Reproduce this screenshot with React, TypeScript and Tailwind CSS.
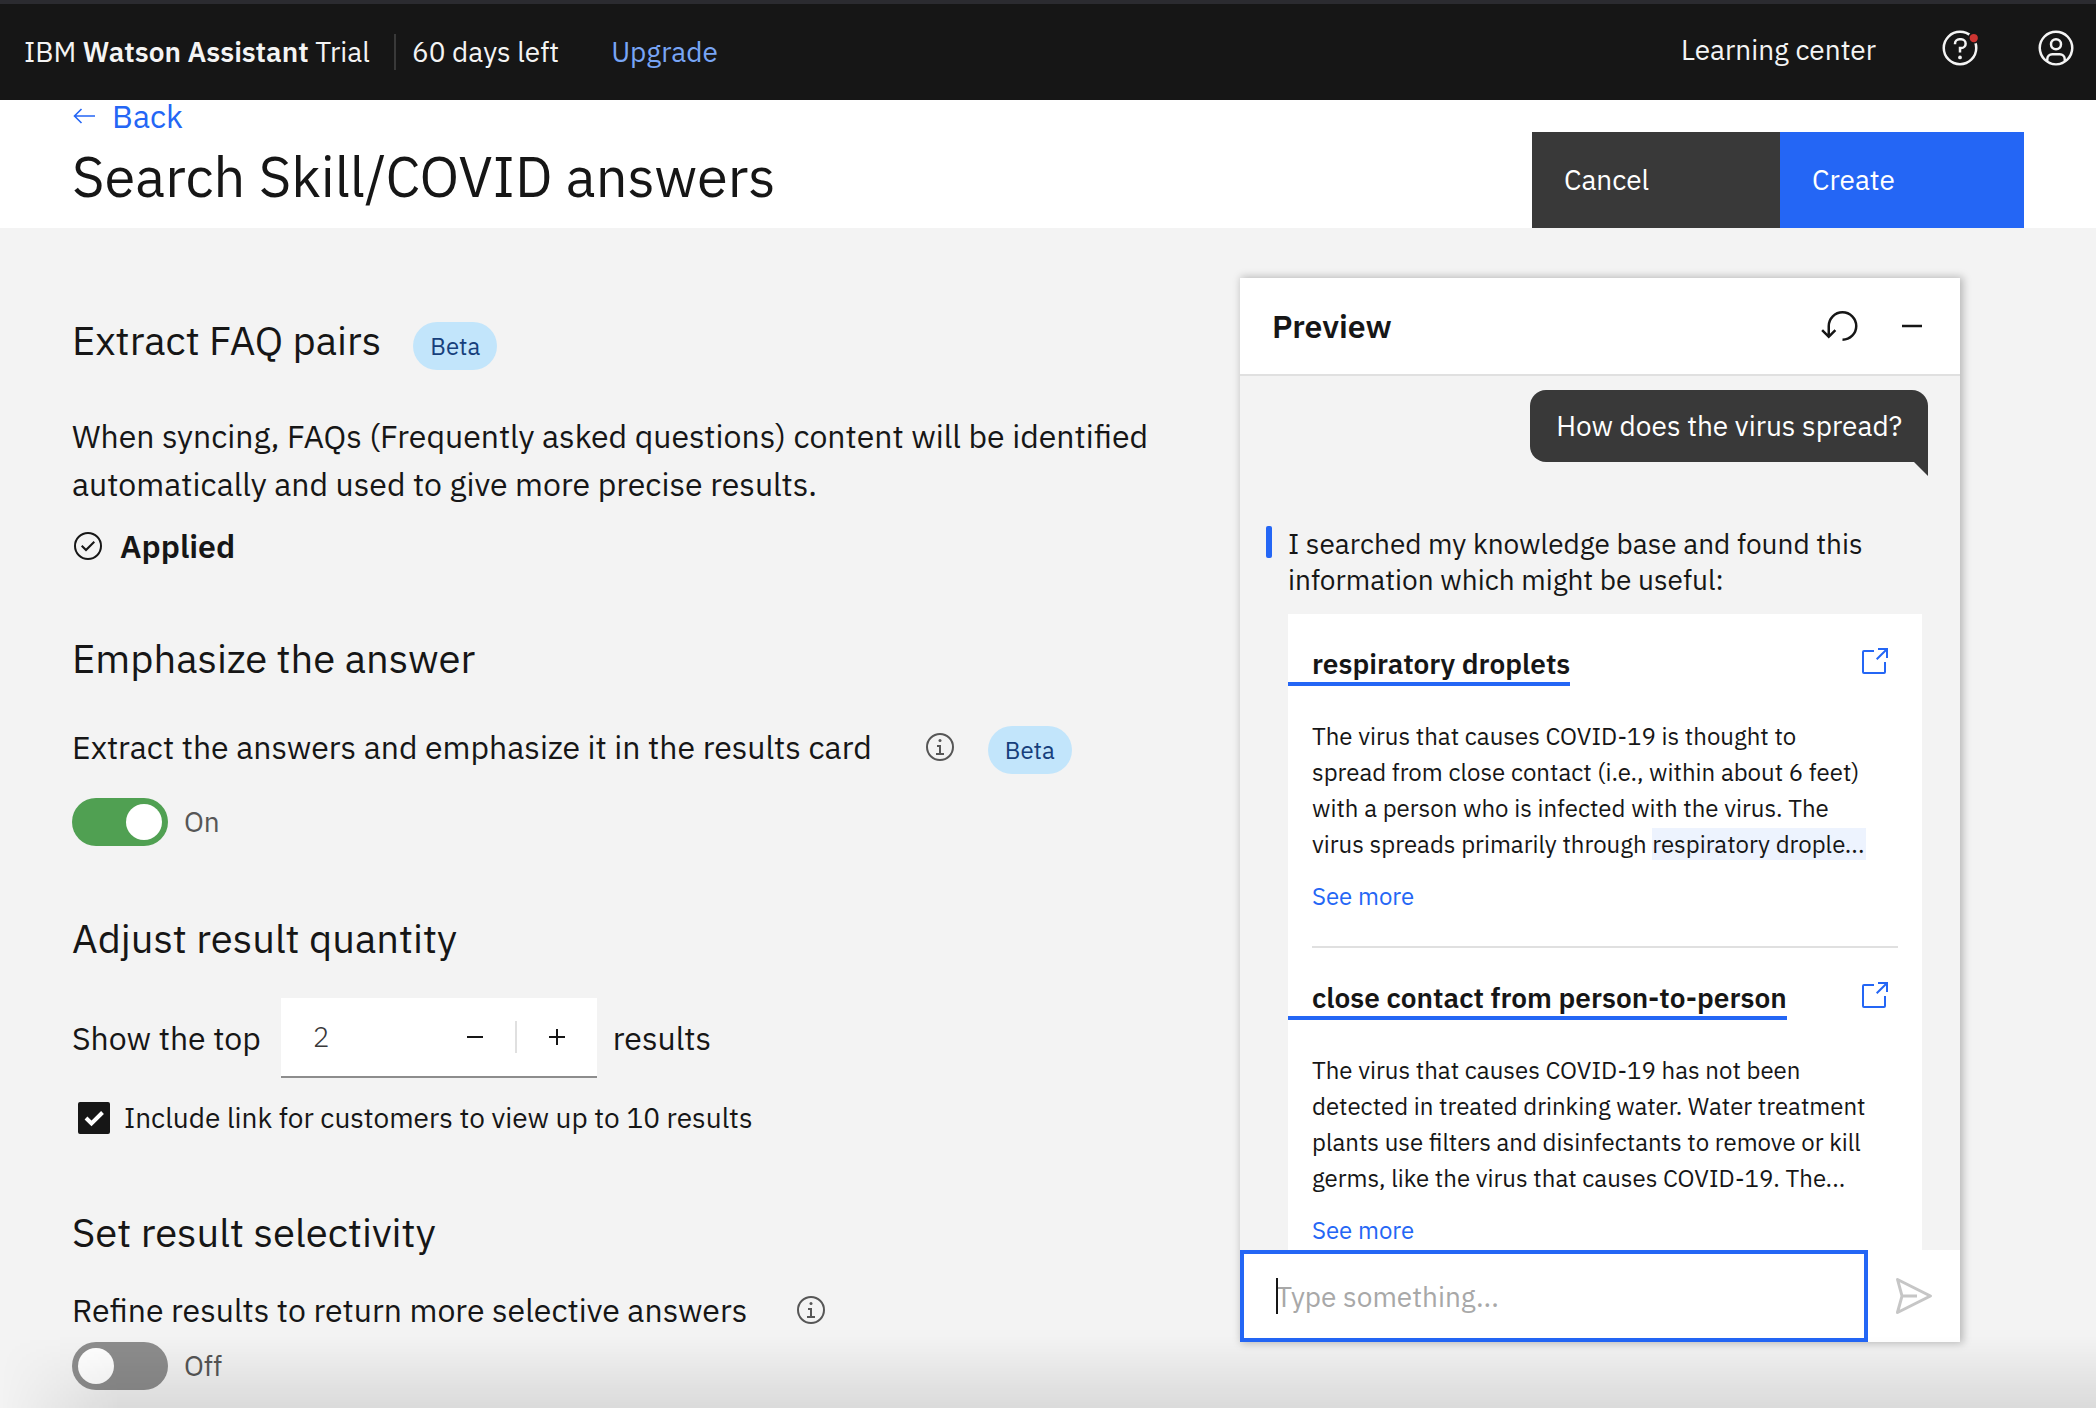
import React, { useState } from "react";

type IconProps = { className?: string; children?: React.ReactNode };

function Icon({ className, children }: IconProps) {
  return (
    <svg viewBox="0 0 32 32" fill="currentColor" aria-hidden="true" className={className}>
      {children}
    </svg>
  );
}

const ring = "M16 2A14 14 0 1 0 30 16 14 14 0 0 0 16 2zm0 26A12 12 0 1 1 28 16 12 12 0 0 1 16 28z";

function HelpIcon() {
  return (
    <Icon className="size-10">
      <path d={ring} />
      <circle cx="16" cy="23.5" r="1.5" />
      <path d="M17 8h-1.5A4.49 4.49 0 0 0 11 12.5v.5h2v-.5A2.5 2.5 0 0 1 15.5 10H17a2.5 2.5 0 0 1 0 5h-2v4.5h2V17a4.5 4.5 0 0 0 0-9z" />
      <circle cx="27" cy="8" r="4.6" fill="#161616" />
      <circle cx="27" cy="8" r="3.3" fill="#cd3532" />
    </Icon>
  );
}

function UserIcon() {
  return (
    <Icon className="size-10">
      <path d="M16 8a5 5 0 1 0 5 5 5 5 0 0 0-5-5zm0 8a3 3 0 1 1 3-3 3 3 0 0 1-3 3z" />
      <path d="M16 2a14 14 0 1 0 14 14A14.016 14.016 0 0 0 16 2zm-6 24.377V25a3.003 3.003 0 0 1 3-3h6a3.003 3.003 0 0 1 3 3v1.377a11.9 11.9 0 0 1-12 0zm13.993-1.451A5.002 5.002 0 0 0 19 20h-6a5.002 5.002 0 0 0-4.993 4.926 12 12 0 1 1 15.986 0z" />
    </Icon>
  );
}

function InfoIcon() {
  return (
    <Icon className="size-8">
      <path d="M17 22v-8h-4v2h2v6h-3v2h8v-2z" />
      <path d="M16 8a1.5 1.5 0 1 0 1.5 1.5A1.5 1.5 0 0 0 16 8z" />
      <path d={ring} />
    </Icon>
  );
}

function LaunchIcon() {
  return (
    <Icon className="size-8">
      <path d="M26 28H6a2.003 2.003 0 0 1-2-2V6a2.003 2.003 0 0 1 2-2h10v2H6v20h20V16h2v10a2.003 2.003 0 0 1-2 2z" />
      <path d="M20 2v2h6.586L18 12.586 19.414 14 28 5.414V12h2V2z" />
    </Icon>
  );
}

function Beta() {
  return (
    <span className="mt-1.5 flex h-12 w-21 items-center justify-center rounded-full bg-[#c2e5fb] text-2xl text-[#163f7c]">
      Beta
    </span>
  );
}

function Heading({ children }: { children: React.ReactNode }) {
  return <h2 className="text-[40px] leading-12">{children}</h2>;
}

function Toggle({ label, initial }: { label: string; initial: boolean }) {
  const [on, setOn] = useState(initial);
  return (
    <label className="flex w-fit items-center gap-4 text-[28px] leading-12 text-[#565656]">
      <input
        type="checkbox"
        role="switch"
        aria-label={label}
        checked={on}
        onChange={() => setOn(!on)}
        className="h-12 w-24 appearance-none rounded-full bg-[#8d8d8d] p-1.5 before:block before:size-9 before:rounded-full before:bg-white checked:bg-[#50a052] checked:before:ml-12"
      />
      {on ? "On" : "Off"}
    </label>
  );
}

function Result({ title, children }: { title: string; children: React.ReactNode }) {
  return (
    <article className="pt-8">
      <div className="flex items-start justify-between pr-6">
        <h3 className="border-b-4 border-[#2466f5] pl-6 text-[28px] leading-9 font-semibold">{title}</h3>
        <a href="#source" aria-label={"Open " + title} className="mr-2 text-[#2466f5]">
          <LaunchIcon />
        </a>
      </div>
      <p className="mt-8 pr-10 pl-6 text-2xl leading-9">{children}</p>
      <a href="#more" className="mt-4 ml-6 block w-fit text-2xl leading-9 text-[#2466f5]">
        See more
      </a>
    </article>
  );
}

export default function App() {
  const [count, setCount] = useState(2);
  const [include, setInclude] = useState(true);

  return (
    <div className="relative flex min-h-screen flex-col overflow-hidden bg-[#f3f3f3] font-['IBM_Plex_Sans',Roboto,sans-serif] text-[#161616]">
      <header className="flex h-25 items-center justify-between border-t-4 border-[#2b2b30] bg-[#161616] pr-5 pl-6 text-[28px] leading-9 text-[#f4f4f4]">
        <div className="flex items-center">
          <span>
            IBM <b className="font-semibold">Watson Assistant</b> Trial
          </span>
          <span className="mr-4 ml-6 h-9 w-0.5 bg-[#393939]" />
          <span>60 days left</span>
          <a href="#upgrade" className="ml-13 text-[#78a5f5]">
            Upgrade
          </a>
        </div>
        <nav className="flex items-center pb-2">
          <a href="#learning" className="pt-1">
            Learning center
          </a>
          <button aria-label="Help" className="ml-16">
            <HelpIcon />
          </button>
          <button aria-label="Account" className="ml-14">
            <UserIcon />
          </button>
        </nav>
      </header>

      <div className="flex items-end justify-between bg-white px-18">
        <div>
          <a href="#back" className="flex items-center gap-4 text-[32px] leading-8 text-[#2466f5]">
            <svg viewBox="0 0 24 24" fill="none" stroke="currentColor" strokeWidth="1.6" aria-hidden="true" className="size-6">
              <path d="M23 12H2.500M9.500 5l-7 7 7 7" />
            </svg>
            Back
          </a>
          <h1 className="pt-1 pb-3 text-[56px] leading-20">Search Skill/COVID answers</h1>
        </div>
        <div className="flex text-[28px] text-white">
          <button className="h-24 w-62 bg-[#393939] px-8 text-left">Cancel</button>
          <button className="h-24 w-61 bg-[#2466f5] px-8 text-left">Create</button>
        </div>
      </div>

      <main className="flex items-start justify-between pr-34 pl-18">
        <div className="max-w-[1130px] pt-22 text-[32px] leading-12">
          <section>
            <div className="flex items-start gap-8">
              <Heading>Extract FAQ pairs</Heading>
              <Beta />
            </div>
            <p className="mt-10.5">
              When syncing, FAQs (Frequently asked questions) content will be identified
              <br />
              automatically and used to give more precise results.
            </p>
            <p className="mt-3.5 flex items-center gap-4 font-semibold">
              <Icon className="size-8">
                <path d="M14 21.414l-5-5.001L10.413 15 14 18.586 21.585 11 23 12.415z" />
                <path d={ring} />
              </Icon>
              Applied
            </p>
          </section>

          <section className="mt-16">
            <Heading>Emphasize the answer</Heading>
            <div className="mt-9.5 flex items-center">
              <p>Extract the answers and emphasize it in the results card</p>
              <button aria-label="About emphasized answers" className="mr-8 ml-13 text-[#565656]">
                <InfoIcon />
              </button>
              <Beta />
            </div>
            <div className="mt-6">
              <Toggle label="Emphasize the answer" initial={true} />
            </div>
          </section>

          <section className="mt-17">
            <Heading>Adjust result quantity</Heading>
            <div className="mt-9 flex items-center gap-4">
              <label htmlFor="count" className="mr-1">
                Show the top
              </label>
              <div className="flex h-20 w-79 items-center border-b-2 border-[#8d8d8d] bg-white pl-8">
                <input
                  id="count"
                  inputMode="numeric"
                  value={count}
                  onChange={(e) => setCount(Number(e.target.value) || 0)}
                  className="min-w-0 flex-1 text-[28px] font-light text-[#393939] outline-none"
                />
                <button aria-label="Fewer results" onClick={() => setCount(count - 1)} className="px-6">
                  <Icon className="size-8">
                    <path d="M8 15h16v2H8z" />
                  </Icon>
                </button>
                <span className="h-8 w-0.5 bg-[#e0e0e0]" />
                <button aria-label="More results" onClick={() => setCount(count + 1)} className="px-6">
                  <Icon className="size-8">
                    <path d="M17 15V8h-2v7H8v2h7v7h2v-7h7v-2z" />
                  </Icon>
                </button>
              </div>
              <span>results</span>
            </div>
            <label className="mt-5.5 ml-1.5 flex w-fit items-center gap-3.5 text-[28px] leading-9">
              <span className="relative size-8">
                <input
                  type="checkbox"
                  checked={include}
                  onChange={() => setInclude(!include)}
                  className="block size-8 appearance-none rounded-xs border-2 border-[#161616] checked:bg-[#161616]"
                />
                <svg
                  viewBox="0 0 32 32"
                  fill="none"
                  stroke="white"
                  strokeWidth="4"
                  aria-hidden="true"
                  className="pointer-events-none absolute inset-0 size-8"
                >
                  <path d="M8 16l5.500 5.500L24.500 10.500" />
                </svg>
              </span>
              Include link for customers to view up to 10 results
            </label>
          </section>

          <section className="mt-18">
            <Heading>Set result selectivity</Heading>
            <div className="mt-7.5 flex items-center">
              <p>Refine results to return more selective answers</p>
              <button aria-label="About selectivity" className="ml-12 text-[#565656]">
                <InfoIcon />
              </button>
            </div>
            <div className="mt-2">
              <Toggle label="Refine results" initial={false} />
            </div>
          </section>
        </div>

        <aside className="mt-12.5 w-180 shrink-0 bg-[#f3f3f3] shadow-[2px_0_8px_1px_rgba(0,0,0,0.25)]">
          <div className="flex h-24.5 items-center border-b-2 border-[#e0e0e0] bg-white pr-7 pl-8">
            <h2 className="flex-1 text-[32px] leading-12 font-semibold">Preview</h2>
            <button aria-label="Restart conversation" className="mr-8">
              <Icon className="size-10">
                <path d="M18 28A12 12 0 1 0 6 16v6.200l-3.600-3.600L1 20l6 6 6-6-1.400-1.400L8 22.200V16a10 10 0 1 1 10 10z" />
              </Icon>
            </button>
            <button aria-label="Minimize">
              <Icon className="size-10">
                <path d="M8 15h16v2H8z" />
              </Icon>
            </button>
          </div>

          <div className="pt-3.5 text-[28px] leading-9">
            <div className="relative mr-8 ml-auto flex h-18 w-fit items-center rounded-2xl rounded-br-none bg-[#393939] px-6.5 text-white">
              How does the virus spread?
              <svg viewBox="0 0 14 14" aria-hidden="true" className="absolute top-full right-0 size-3.5">
                <path d="M0 0h14v14z" fill="#393939" />
              </svg>
            </div>
            <div className="mt-16 mr-9.5 ml-6.5 flex items-start gap-4">
              <span className="h-8 w-1.5 shrink-0 rounded-xs bg-[#2466f5]" />
              <p>
                I searched my knowledge base and found this
                <br />
                information which might be useful:
              </p>
            </div>
            <div className="mt-4 mr-9.5 ml-12 bg-white pb-0.5">
              <Result title="respiratory droplets">
                The virus that causes COVID-19 is thought to
                <br />
                spread from close contact (i.e., within about 6 feet)
                <br />
                with a person who is infected with the virus. The
                <br />
                virus spreads primarily through{" "}
                <mark className="bg-[#edf3fe] pr-0.5 text-inherit">respiratory drople...</mark>
              </Result>
              <hr className="mx-6 mt-8 border-t-2 border-[#e0e0e0]" />
              <Result title="close contact from person-to-person">
                The virus that causes COVID-19 has not been
                <br />
                detected in treated drinking water. Water treatment
                <br />
                plants use filters and disinfectants to remove or kill
                <br />
                germs, like the virus that causes COVID-19. The...
              </Result>
            </div>
          </div>

          <form className="flex h-23 bg-white" onSubmit={(e) => e.preventDefault()}>
            <div className="relative flex-1">
              <input
                aria-label="Message"
                placeholder="Type something..."
                className="size-full border-4 border-[#2466f5] pl-8 text-[28px] outline-none placeholder:text-[#a8a8a8]"
              />
              <span className="pointer-events-none absolute top-7 left-9 h-9 w-0.5 bg-[#161616]" />
            </div>
            <button aria-label="Send" className="px-5.5 text-[#c6c6c6]">
              <Icon className="size-12">
                <path d="M27.450 15.110l-22-11a1 1 0 0 0-1.080.120 1 1 0 0 0-.330 1L7 16 4 26.740A1 1 0 0 0 5 28a1 1 0 0 0 .450-.110l22-11a1 1 0 0 0 0-1.780zm-20.900 10L8.760 17H18v-2H8.760L6.550 6.890 24.760 16z" />
              </Icon>
            </button>
          </form>
        </aside>
      </main>

      <div className="pointer-events-none absolute inset-x-0 bottom-0 h-18 bg-linear-to-t from-black/10 to-transparent mask-[linear-gradient(to_right,transparent,black_120px)]" />
    </div>
  );
}
